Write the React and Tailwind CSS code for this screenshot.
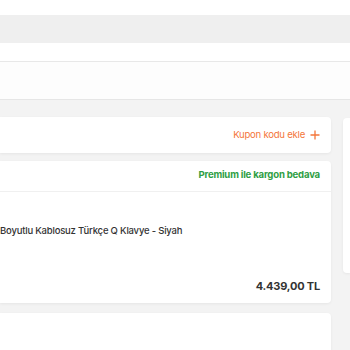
const App = () => {
  return (
    <div
      className="w-[350px] h-[350px] overflow-hidden bg-white flex flex-col"
      style={{ fontFamily: "Inter, 'Liberation Sans', sans-serif" }}
    >
      {/* header bars */}
      <div className="h-[15px] shrink-0 bg-white" />
      <div className="h-[28px] shrink-0 bg-[#efefef]" />
      <div className="h-[19px] shrink-0 bg-white border-b border-[#e8e8e8]" />
      <div className="h-[38px] shrink-0 bg-[#fdfdfd] border-b border-[#e6e6e6]" />

      {/* content */}
      <div className="flex-1 bg-[#f3f3f3] flex gap-[12px] pt-[17px]">
        <div className="w-[331px] shrink-0 flex flex-col gap-[8px]">
          <div className="h-[36px] bg-white rounded-r-[4px] shadow-[0_1px_3px_rgba(0,0,0,0.06)] flex items-center justify-end pr-[11px]">
            <span className="text-[9.6px] text-[#f4763a] tracking-[-0.25px]">Kupon kodu ekle</span>
            <svg className="ml-[5px]" width="10" height="10" viewBox="0 0 10 10">
              <path d="M5 0.5V9.5M0.5 5H9.5" stroke="#f4763a" strokeWidth="1.3" />
            </svg>
          </div>

          <div className="bg-white rounded-r-[4px] shadow-[0_1px_3px_rgba(0,0,0,0.06)]">
            <div className="h-[31px] border-b border-[#f0f0f0] flex items-center justify-end pr-[11px] pb-[1px]">
              <span className="text-[9.6px] font-bold text-[#2f9e44] tracking-[-0.2px]">Premium ile kargon bedava</span>
            </div>
            <div className="h-[111px] flex flex-col pr-[11px]">
              <div className="pt-[32px] text-[9.5px] font-medium text-[#333] tracking-[-0.2px]">
                Boyutlu Kablosuz Türkçe Q Klavye - Siyah
              </div>
              <div className="mt-auto pb-[9px] text-right text-[11px] font-bold text-[#333] tracking-[-0.2px]">
                4.439,00 TL
              </div>
            </div>
          </div>

          <div className="h-[60px] bg-white rounded-r-[4px] shadow-[0_1px_3px_rgba(0,0,0,0.06)] mt-[2px]" />
        </div>

        <div className="flex-1 pt-[1px]">
          <div className="h-[155px] bg-white rounded-l-[4px] shadow-[0_1px_3px_rgba(0,0,0,0.06)]" />
        </div>
      </div>
    </div>
  );
};

export default App;
